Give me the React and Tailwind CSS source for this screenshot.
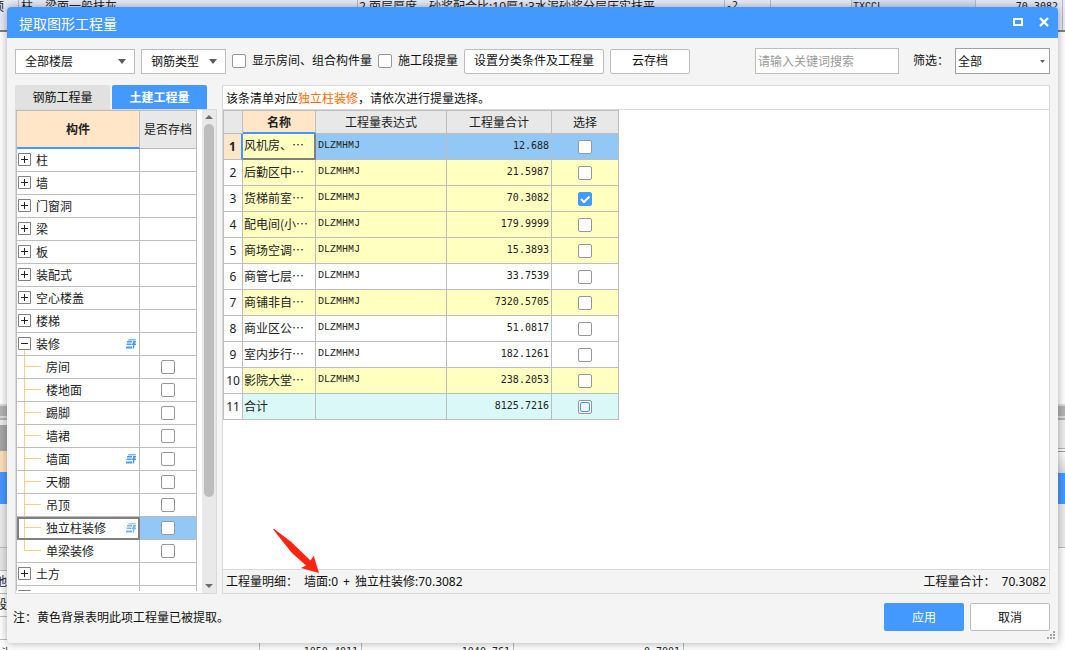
import { useState } from "react";
import clsx from "clsx";

const components = [
  { name: "柱" },
  { name: "墙" },
  { name: "门窗洞" },
  { name: "梁" },
  { name: "板" },
  { name: "装配式" },
  { name: "空心楼盖" },
  { name: "楼梯" },
  { name: "装修", open: true, linked: true },
  { name: "房间", child: true },
  { name: "楼地面", child: true },
  { name: "踢脚", child: true },
  { name: "墙裙", child: true },
  { name: "墙面", child: true, linked: true },
  { name: "天棚", child: true },
  { name: "吊顶", child: true },
  { name: "独立柱装修", child: true, linked: true, selected: true },
  { name: "单梁装修", child: true, last: true },
  { name: "土方" },
  { name: "" },
];

const quantities = [
  { id: 1, name: "风机房、…", expr: "DLZMHMJ", total: "12.688", used: true },
  { id: 2, name: "后勤区中…", expr: "DLZMHMJ", total: "21.5987", used: true },
  { id: 3, name: "货梯前室…", expr: "DLZMHMJ", total: "70.3082", used: true },
  { id: 4, name: "配电间(小…", expr: "DLZMHMJ", total: "179.9999", used: true },
  { id: 5, name: "商场空调…", expr: "DLZMHMJ", total: "15.3893", used: true },
  { id: 6, name: "商管七层…", expr: "DLZMHMJ", total: "33.7539" },
  { id: 7, name: "商铺非自…", expr: "DLZMHMJ", total: "7320.5705", used: true },
  { id: 8, name: "商业区公…", expr: "DLZMHMJ", total: "51.0817" },
  { id: 9, name: "室内步行…", expr: "DLZMHMJ", total: "182.1261" },
  { id: 10, name: "影院大堂…", expr: "DLZMHMJ", total: "238.2053", used: true },
  { id: 11, name: "合计", expr: "", total: "8125.7216", sum: true },
];

function Checkbox({ partial, ...props }) {
  return (
    <span className="inline-grid size-3.5 shrink-0 align-middle">
      <input
        type="checkbox"
        className={clsx(
          "peer col-start-1 row-start-1 size-3.5 appearance-none rounded-[2px] border border-[#979797] checked:border-[#4499ff] checked:bg-[#4499ff]",
          partial ? "bg-[#f4f4f4]" : "bg-white"
        )}
        {...props}
      />
      <svg
        viewBox="0 0 14 14"
        className={clsx(
          "pointer-events-none col-start-1 row-start-1 size-3.5",
          !partial && "invisible peer-checked:visible"
        )}
      >
        {partial ? (
          <rect x="2.5" y="2.5" width="9" height="9" rx="1.5" fill="#f4f4f4" stroke="#4499ff" />
        ) : (
          <path d="M3 7l3 3 5.5-5.5" fill="none" stroke="#fff" strokeWidth="2" />
        )}
      </svg>
    </span>
  );
}

function Dropdown({ label, value, className, selectClass, arrow }) {
  return (
    <span className={clsx("inline-grid items-center", className)}>
      <select
        aria-label={label}
        className={clsx("col-start-1 row-start-1 w-full appearance-none border bg-white pt-px", selectClass)}
      >
        <option>{value}</option>
      </select>
      <svg
        viewBox="0 0 8 5"
        className={clsx("pointer-events-none col-start-1 row-start-1 justify-self-end", arrow)}
      >
        <path d="M0 0h8L4 5z" fill="#5c5c5c" />
      </svg>
    </span>
  );
}

function TitleBar() {
  return (
    <header className="flex h-[31px] shrink-0 items-center justify-between rounded-t bg-[#4499ff] pr-2 pl-3 text-white">
      <h1 className="pt-0.5 text-sm leading-5">提取图形工程量</h1>
      <div className="flex gap-3.5">
        <button type="button" aria-label="最大化">
          <svg viewBox="0 0 12 12" className="size-3">
            <path d="M2 2h8v6H2z" fill="none" stroke="#fff" strokeWidth="2" />
          </svg>
        </button>
        <button type="button" aria-label="关闭">
          <svg viewBox="0 0 12 12" className="size-3">
            <path d="M2 1l8 8M10 1l-8 8" stroke="#fff" strokeWidth="2.4" />
          </svg>
        </button>
      </div>
    </header>
  );
}

function Toolbar() {
  return (
    <div className="flex shrink-0 items-center gap-1.5 px-2 pt-2.5 pb-[11px]">
      <Dropdown
        label="楼层"
        value="全部楼层"
        className="w-[120px]"
        selectClass="h-[25px] border-[#bdbdbd] pl-[9px]"
        arrow="mr-[9px] h-[5px] w-2"
      />
      <Dropdown
        label="钢筋类型"
        value="钢筋类型"
        className="w-[85px]"
        selectClass="h-[25px] border-[#bdbdbd] pl-[9px]"
        arrow="mr-[9px] h-[5px] w-2"
      />
      <label className="flex items-center gap-1.5">
        <Checkbox />
        显示房间、组合构件量
      </label>
      <label className="flex items-center gap-1.5">
        <Checkbox />
        施工段提量
      </label>
      <button type="button" className="h-[25px] w-[140px] rounded-[2px] border border-[#bdbdbd] bg-white">
        设置分类条件及工程量
      </button>
      <button type="button" className="h-[25px] w-20 rounded-[2px] border border-[#bdbdbd] bg-white">
        云存档
      </button>
      <input
        type="text"
        aria-label="搜索"
        placeholder="请输入关键词搜索"
        className="ml-auto h-[26px] w-36 border border-[#bdbdbd] bg-white px-0.5 placeholder:text-[#9a9a9a]"
      />
      <span className="ml-2">筛选：</span>
      <Dropdown
        label="筛选"
        value="全部"
        className="w-[95px]"
        selectClass="h-[26px] border-[#a0a0a0] pl-0.5"
        arrow="mr-[5px] h-[3px] w-[5px]"
      />
    </div>
  );
}

function Expander({ open }) {
  return (
    <button type="button" aria-label={open ? "收起" : "展开"} className="ml-px shrink-0">
      <svg viewBox="0 0 13 22" className="h-[22px] w-[13px]">
        {open && <path d="M6.5 17v5" stroke="#ffcc80" />}
        <path d="M.5 4.5h12v12H.5z" fill="#fff" stroke="#808080" />
        <path d={open ? "M3 10.5h7" : "M3 10.5h7M6.5 7v7"} stroke="#222" />
      </svg>
    </button>
  );
}

function Branch({ last }) {
  return (
    <svg viewBox="0 0 25 22" className="h-[22px] w-[25px] shrink-0">
      <path d={last ? "M7.5 0v10.5H24" : "M7.5 0v22M7.5 10.5H24"} fill="none" stroke="#ffcc80" />
    </svg>
  );
}

function LinkedIcon({ faded }) {
  return (
    <svg viewBox="0 0 10 10" className={clsx("mr-[3px] ml-auto size-2.5 shrink-0", faded && "opacity-75")}>
      <path d="M2.5 0H10L9.4 1.4H2z" fill="#7ab6ff" />
      <path d="M1 2h5v1.4H1zM.5 4.6h5V6h-5zM0 7.6h6V9.4H0z" fill="#4499ff" />
      <path d="M7 2h3v1.4H8.8v1.2H10V6H8.6L8 9.4H6.6L7 6H6V4.6h1z" fill="#4499ff" />
    </svg>
  );
}

function ComponentTree() {
  return (
    <table className="w-[181px] table-fixed border-separate border-spacing-0 border-t border-l border-[#bdbdbd] bg-white text-[#222]">
      <colgroup>
        <col className="w-[123px]" />
        <col className="w-[57px]" />
      </colgroup>
      <thead>
        <tr className="h-[38px]">
          <th className="border-r border-b-2 border-r-[#bdbdbd] border-b-[#4499ff] bg-[#ffe6c8] p-0 pt-0.5 font-bold">
            构件
          </th>
          <th className="border-r border-b border-[#bdbdbd] bg-[#e8e8e8] p-0 font-normal whitespace-nowrap">是否存档</th>
        </tr>
      </thead>
      <tbody>
        {components.map((item) => (
          <tr key={item.name}>
            <td
              className={clsx(
                "border-r border-b border-[#bdbdbd] p-0",
                item.selected && "outline-2 -outline-offset-2 outline-[#808080]"
              )}
            >
              <div className="flex h-[22px] items-center">
                {item.child ? <Branch last={item.last} /> : <Expander open={item.open} />}
                <span className={clsx("pt-0.5", item.child ? "ml-1" : "ml-[5px]")}>{item.name}</span>
                {item.linked && <LinkedIcon faded={item.selected} />}
              </div>
            </td>
            <td
              className={clsx(
                "border-r border-b border-[#bdbdbd] p-0 text-center leading-none",
                item.selected && "bg-[#91c8f6]"
              )}
            >
              {item.child && <Checkbox aria-label={`${item.name}存档`} />}
            </td>
          </tr>
        ))}
      </tbody>
    </table>
  );
}

function Scrollbar() {
  return (
    <div className="flex w-3.5 flex-col items-center bg-[#e9e9e9] py-[5px]">
      <svg viewBox="0 0 8 4" className="h-1 w-2 shrink-0">
        <path d="M0 4h8L4 0z" fill="#6b6b75" />
      </svg>
      <div className="min-h-0 w-2.5 flex-1 py-[5px]">
        <div className="h-[82%] rounded-full bg-[#bdbdbd]" />
      </div>
      <svg viewBox="0 0 8 4" className="h-1 w-2 shrink-0">
        <path d="M0 0h8L4 4z" fill="#6b6b75" />
      </svg>
    </div>
  );
}

function LeftPanel() {
  return (
    <section className="flex w-[202px] shrink-0 flex-col">
      <div role="tablist" className="flex shrink-0 gap-0.5">
        <button
          type="button"
          role="tab"
          aria-selected="false"
          className="h-6 w-[95px] rounded-t-[2px] bg-[#e1e1e1] pt-0.5"
        >
          钢筋工程量
        </button>
        <button
          type="button"
          role="tab"
          aria-selected="true"
          className="h-6 w-[95px] rounded-t-[2px] bg-[#4499ff] pt-0.5 font-bold text-white"
        >
          土建工程量
        </button>
      </div>
      <div className="flex min-h-0 flex-1 justify-between border border-[#d9d9d9] bg-white">
        <div className="mb-0.5 overflow-hidden">
          <ComponentTree />
        </div>
        <Scrollbar />
      </div>
    </section>
  );
}

function QuantityTable() {
  const [picked, setPicked] = useState([3]);

  const toggle = (id) => {
    setPicked((prev) => (prev.includes(id) ? prev.filter((p) => p !== id) : [...prev, id]));
  };

  return (
    <table className="w-[396px] table-fixed border-separate border-spacing-0 border-t border-l border-[#bdbdbd] text-[#222]">
      <colgroup>
        <col className="w-[19px]" />
        <col className="w-[73px]" />
        <col className="w-[131px]" />
        <col className="w-[105px]" />
        <col className="w-[67px]" />
      </colgroup>
      <thead className="bg-[#e8e8e8]">
        <tr className="h-[23px]">
          <th className="border-r border-b border-[#bdbdbd] p-0" />
          <th className="border-r border-b-2 border-r-[#bdbdbd] border-b-[#4499ff] bg-[#ffe6c8] p-0 pt-0.5 font-bold">
            名称
          </th>
          <th className="border-r border-b border-[#bdbdbd] p-0 pt-0.5 font-normal">工程量表达式</th>
          <th className="border-r border-b border-[#bdbdbd] p-0 pt-0.5 font-normal">工程量合计</th>
          <th className="border-r border-b border-[#bdbdbd] p-0 pt-0.5 font-normal">选择</th>
        </tr>
      </thead>
      <tbody>
        {quantities.map((row) => {
          const active = row.id === 1;
          const fill = clsx(
            active && "bg-[#91c8f6]",
            !active && row.used && "bg-[#ffffc0]",
            row.sum && "bg-[#daf8f8]"
          );
          return (
            <tr key={row.id} className="h-[26px]">
              <th
                className={clsx(
                  "border-b border-b-[#bdbdbd] p-0 text-center",
                  active ? "border-r-2 border-r-[#4499ff] bg-[#ffe6c8] font-bold" : "border-r border-r-[#bdbdbd] font-normal"
                )}
              >
                {row.id}
              </th>
              <td
                className={clsx(
                  "p-0 pb-0.5 pl-px whitespace-nowrap font-['Noto_Sans_CJK_SC',sans-serif]",
                  active
                    ? "border-r-2 border-b-2 border-[#808080] bg-[#ffffc0]"
                    : ["border-r border-b border-[#bdbdbd]", fill]
                )}
              >
                {row.name}
              </td>
              <td
                className={clsx(
                  "border-r border-b border-[#bdbdbd] p-0 pb-0.5 pl-0.5 font-['Liberation_Mono',monospace] text-[10px]",
                  fill
                )}
              >
                {row.expr}
              </td>
              <td
                className={clsx(
                  "border-r border-b border-[#bdbdbd] p-0 pr-0.5 pb-0.5 text-right font-['DejaVu_Sans_Mono',monospace] text-[10px]",
                  fill
                )}
              >
                {row.total}
              </td>
              <td className={clsx("border-r border-b border-[#bdbdbd] p-0 text-center leading-none", fill)}>
                <Checkbox
                  aria-label={`选择${row.name}`}
                  partial={row.sum}
                  checked={picked.includes(row.id)}
                  onChange={() => toggle(row.id)}
                />
              </td>
            </tr>
          );
        })}
      </tbody>
    </table>
  );
}

function RightPanel() {
  return (
    <section className="flex min-w-0 flex-1 flex-col border border-[#d9d9d9] bg-white">
      <p className="flex h-6 shrink-0 items-center border-b border-[#d9d9d9] pt-0.5 pl-[3px]">
        该条清单对应<span className="text-[#ff6a00]">独立柱装修</span>，请依次进行提量选择。
      </p>
      <div className="min-h-0 flex-1 overflow-hidden">
        <QuantityTable />
      </div>
      <div className="relative flex h-6 shrink-0 items-center border-t border-[#d9d9d9] bg-[#f4f4f4] px-[3px]">
        <span>工程量明细：</span>
        <span className="ml-1.5 flex gap-[5px]">
          <span>墙面:0</span>
          <span>+</span>
          <span>独立柱装修:70.3082</span>
        </span>
        <span className="ml-auto">工程量合计：</span>
        <span className="ml-1.5">70.3082</span>
        <svg viewBox="0 0 46 44" className="pointer-events-none absolute -top-[41px] left-[50px] h-11 w-[46px]">
          <path d="M0 .3L1.2 0 18 12.7 37.5 31.5 40.7 26.8 46 44 28 39 33 36.5 18.5 23.5z" fill="#ff2412" />
        </svg>
      </div>
    </section>
  );
}

function DialogFooter() {
  return (
    <footer className="flex h-[49px] shrink-0 items-start pt-[9px] pr-2 pl-1.5">
      <p className="pt-px leading-7">注：黄色背景表明此项工程量已被提取。</p>
      <button type="button" className="ml-auto h-7 w-20 rounded-[2px] bg-[#4499ff] pt-0.5 text-white">
        应用
      </button>
      <button type="button" className="ml-1.5 h-7 w-20 rounded-[2px] border border-[#bdbdbd] bg-white pt-0.5">
        取消
      </button>
      <svg viewBox="0 0 8 8" className="absolute right-[3px] bottom-1 size-2">
        <path d="M6 0h2v2H6zM3 3h2v2H3zM6 3h2v2H6zM0 6h2v2H0zM3 6h2v2H3zM6 6h2v2H6z" fill="#a6a6a6" />
      </svg>
    </footer>
  );
}

// The bill-of-quantities window that shows round the edges of the dialog.
function Backdrop() {
  return (
    <div aria-hidden="true" className="absolute inset-0 flex flex-col overflow-hidden bg-white text-[#222]">
      <div className="flex h-8 shrink-0 border-b-2 border-[#808080] bg-[#e6ebf7] leading-[14px] whitespace-nowrap">
        <span className="flex w-[19px] justify-end border-r border-[#bdbdbd] pr-3.5">顶</span>
        <span className="w-[339px] border-r border-[#bdbdbd] pl-0.5">柱、梁面一般抹灰</span>
        <span className="min-w-0 flex-1 border-r border-[#bdbdbd] pl-px">
          2.面层厚度、砂浆配合比:10厚1:3水泥砂浆分层压实抹平
        </span>
        <span className="w-[46px] border-r border-[#bdbdbd] pl-px font-['DejaVu_Sans_Mono',monospace] text-[10px] leading-[12px]">
          -2
        </span>
        <span className="w-[81px] border-r border-[#bdbdbd]" />
        <span className="w-[124px] border-r border-[#bdbdbd] bg-[#d5e0f3] pl-px font-['Liberation_Mono',monospace] text-[10px]">
          TXCCL
        </span>
        <span className="w-[87px] border-r border-[#bdbdbd] pr-1 text-right font-['DejaVu_Sans_Mono',monospace] text-[10px]">
          70.3082
        </span>
        <span className="w-0.5" />
      </div>
      <div className="flex min-h-0 flex-1 justify-between">
        <div className="flex w-3 flex-col justify-end">
          <div className="h-3.5 shrink-0 border-y-2 border-[#dddddd] bg-[#b4b4b4]" />
          <div className="h-[7px] shrink-0 border-t-2 border-[#b4b4b4] bg-[#eeeeee]" />
          <div className="h-[26px] shrink-0 bg-[#a8a8a8]" />
          <div className="h-[21px] shrink-0 bg-[#ffe0bd]" />
          <div className="h-8 shrink-0 bg-[#4499ff]" />
          <div className="h-11 shrink-0 border-b border-[#bdbdbd] bg-[#ececec]" />
          <div className="h-[23px] shrink-0 border-b border-[#bdbdbd] bg-[#e8e8e8]" />
          <div className="flex h-[23px] shrink-0 items-center justify-end border-b border-[#bdbdbd] pr-[5px]">他</div>
          <div className="flex h-[23px] shrink-0 items-center justify-end border-b border-[#bdbdbd] pr-[5px]">段</div>
          <div className="h-[23px] shrink-0 border-b border-[#bdbdbd]" />
        </div>
        <div className="flex w-3 flex-col justify-end">
          <div className="h-3.5 shrink-0 border-y-2 border-[#dddddd] bg-[#b4b4b4]" />
          <div className="h-[31px] shrink-0 border-t-2 border-b border-[#b4b4b4] bg-[#eeeeee]" />
          <div className="mt-0.5 h-[22px] shrink-0 border-t border-[#999999] bg-linear-to-b from-white to-[#dddddd]" />
          <div className="h-[31px] shrink-0 bg-[#4499ff]" />
          <div className="h-11 shrink-0 border-b border-[#bdbdbd] bg-[#ececec]" />
          <div className="h-[92px] shrink-0" />
        </div>
      </div>
      <div className="flex h-2.5 shrink-0 items-start font-['DejaVu_Sans_Mono',monospace] text-[10px] leading-6">
        <span className="h-full w-[260px] border-r border-[#bdbdbd]">斗</span>
        <span className="h-full w-[102px] border-r border-[#bdbdbd] pr-[3px] text-right">1050.4011</span>
        <span className="h-full w-[152px] border-r border-[#bdbdbd] pr-[3px] text-right">1040.761</span>
        <span className="h-full w-[170px] border-r border-[#bdbdbd] pr-[3px] text-right">0.7001</span>
      </div>
    </div>
  );
}

export default function App() {
  return (
    <div
      lang="zh-CN"
      className="relative flex h-screen flex-col p-[7px] font-['Noto_Sans','Noto_Sans_CJK_SC',sans-serif] text-xs text-[#111]"
    >
      <Backdrop />
      <main className="relative flex min-h-0 flex-1 flex-col rounded bg-[#f4f4f4] shadow-[0_0_10px_rgba(0,0,0,0.35)]">
        <TitleBar />
        <Toolbar />
        <div className="flex min-h-0 flex-1 gap-[5px] px-2">
          <LeftPanel />
          <RightPanel />
        </div>
        <DialogFooter />
      </main>
    </div>
  );
}
